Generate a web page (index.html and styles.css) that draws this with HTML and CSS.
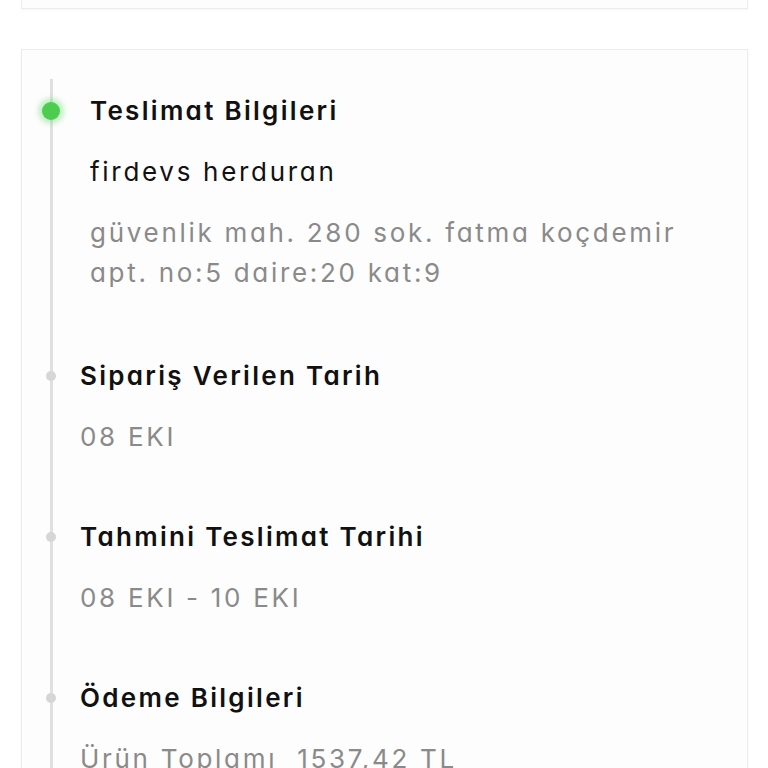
FILE: index.html
```html
<!DOCTYPE html>
<html lang="tr">
<head>
<meta charset="utf-8">
<link rel="stylesheet" href="styles.css">
</head>
<body>
<div class="page">
  <div class="card card-top"></div>
  <div class="card card-main">
    <div class="timeline">
      <div class="item item-first">
        <span class="dot dot-active"></span>
        <div class="title">Teslimat Bilgileri</div>
        <div class="name">firdevs herduran</div>
        <div class="muted">güvenlik mah. 280 sok. fatma koçdemir<br>apt. no:5 daire:20 kat:9</div>
      </div>
      <div class="item">
        <span class="dot"></span>
        <div class="title">Sipariş Verilen Tarih</div>
        <div class="muted">08 EKI</div>
      </div>
      <div class="item">
        <span class="dot"></span>
        <div class="title">Tahmini Teslimat Tarihi</div>
        <div class="muted">08 EKI - 10 EKI</div>
      </div>
      <div class="item">
        <span class="dot"></span>
        <div class="title">Ödeme Bilgileri</div>
        <div class="muted">Ürün Toplamı &nbsp;1537,42 TL</div>
      </div>
    </div>
  </div>
</div>
</body>
</html>
```
FILE: styles.css
```css
html, body {
  margin: 0;
  padding: 0;
  background: #ffffff;
}
body {
  font-family: Inter, "Noto Sans", sans-serif;
  font-feature-settings: "cv11";
  overflow: hidden;
  height: 768px;
}
.page {
  padding: 0 20px 0 21px;
  display: flex;
  flex-direction: column;
  gap: 40px;
}
.card {
  background: #fdfdfd;
  border: 1px solid #ececec;
  box-shadow: 0 1px 2px rgba(0,0,0,0.04);
}
.card-top {
  height: 8px;
  border-top: none;
}
.card-main {
  height: 800px;
  padding-top: 41px;
}
.timeline {
  position: relative;
  margin-left: 28px;
  padding-left: 27px;
  border-left: 3px solid #e0e0e0;
  margin-top: -12px;
  padding-top: 12px;
}
.item {
  position: relative;
  margin-bottom: 60px;
}
.item-first {
  padding-left: 10px;
  margin-bottom: 63px;
}
.dot {
  position: absolute;
  left: -34px;
  top: 15px;
  width: 10px;
  height: 10px;
  border-radius: 50%;
  background: #d6d6d6;
}
.dot-active {
  left: -38px;
  top: 11px;
  width: 18px;
  height: 18px;
  background: #4ccd50;
  box-shadow: 0 0 5px 4px rgba(90, 215, 95, 0.35);
}
.title {
  font-size: 26px;
  line-height: 40px;
  font-weight: 600;
  letter-spacing: 2.3px;
  color: #111111;
  margin-bottom: 21px;
}
.name {
  font-size: 26px;
  line-height: 40px;
  font-weight: 400;
  letter-spacing: 2.7px;
  color: #111111;
  margin-bottom: 21px;
}
.muted {
  font-size: 26px;
  line-height: 40px;
  letter-spacing: 2.7px;
  color: #8a8a8a;
  white-space: nowrap;
}
```
